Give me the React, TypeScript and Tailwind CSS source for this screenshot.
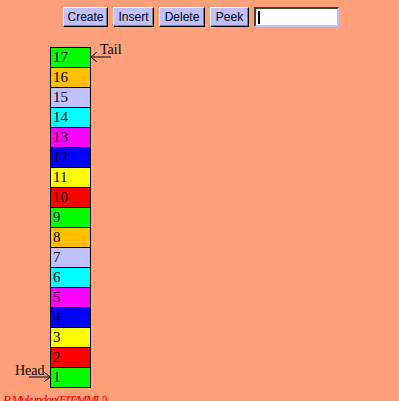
import React from "react";

const colors = [
	"bg-[#00ff00]",
	"bg-[#ff0000]",
	"bg-[#ffff00]",
	"bg-[#0000ff]",
	"bg-[#ff00ff]",
	"bg-[#00ffff]",
	"bg-[#c0c0ff]",
	"bg-[#ffc000]",
];

const items = Array.from({ length: 17 }, (_, i) => 17 - i);

function Btn({ label, w }: { label: string; w: string }) {
	return (
		<button
			className={`${w} h-[20px] bg-[#c0c0ff] border border-t-white border-l-white border-r-black border-b-black text-[12px] text-black leading-none shadow-[inset_-1px_-1px_0_#808080]`}
			style={{ fontFamily: "'Liberation Sans', Arial, sans-serif" }}
		>
			{label}
		</button>
	);
}

export default function App() {
	return (
		<div className="w-[399px] h-[401px] bg-[#ffa07a] overflow-hidden">
			<div className="flex justify-center gap-[5px] pt-[7px] pl-[3px]">
				<Btn label="Create" w="w-[45px]" />
				<Btn label="Insert" w="w-[41px]" />
				<Btn label="Delete" w="w-[46px]" />
				<Btn label="Peek" w="w-[39px]" />
				<div className="w-[85px] h-[20px] bg-white border-2 border-t-[#404040] border-l-[#404040] border-r-[#c0c0ff] border-b-[#c0c0ff] flex items-center pl-[2px]">
					<div className="w-[2px] h-[13px] bg-black" />
				</div>
			</div>
			<div className="relative ml-[50px] mt-[20px] w-[41px]">
				<div className="border border-black">
					{items.map((n, i) => (
						<div
							key={n}
							className={`${i < items.length - 1 ? "h-[20px] border-b border-black" : "h-[19px]"} ${colors[(n - 1) % 8]} flex items-center pl-[2px] text-[15px] text-black leading-none`}
							style={{ fontFamily: "'Liberation Serif', 'Times New Roman', serif" }}
						>
							{n}
						</div>
					))}
				</div>
				{/* tail pointer */}
				<div
					className="absolute left-[50px] top-[-4px] text-[14px] text-black leading-none"
					style={{ fontFamily: "'Liberation Serif', 'Times New Roman', serif" }}
				>
					Tail
				</div>
				<svg className="absolute left-[38px] top-[4px]" width="24" height="14" viewBox="0 0 24 14">
					<line x1="3" y1="6" x2="23" y2="6" stroke="black" strokeWidth="1" />
					<line x1="3" y1="6" x2="9" y2="1" stroke="black" strokeWidth="1" />
					<line x1="3" y1="6" x2="9" y2="11" stroke="black" strokeWidth="1" />
					<rect x="2" y="5" width="2" height="2" fill="black" />
				</svg>
				{/* head pointer */}
				<div
					className="absolute left-[-35px] top-[317px] text-[14px] text-black leading-none"
					style={{ fontFamily: "'Liberation Serif', 'Times New Roman', serif" }}
				>
					Head
				</div>
				<svg className="absolute left-[-21px] top-[323px]" width="24" height="14" viewBox="0 0 24 14">
					<line x1="0" y1="7" x2="21" y2="7" stroke="black" strokeWidth="1" />
					<line x1="21" y1="7" x2="15" y2="2" stroke="black" strokeWidth="1" />
					<line x1="21" y1="7" x2="15" y2="12" stroke="black" strokeWidth="1" />
					<rect x="20" y="6" width="2" height="2" fill="black" />
				</svg>
			</div>
			<div
				className="ml-[3px] mt-[5px] text-[13px] italic tracking-[-1.4px] text-[#ff0000] leading-none"
				style={{ fontFamily: "'Liberation Serif', 'Times New Roman', serif" }}
			>
				R.Mukundan(FIT/MMU)
			</div>
		</div>
	);
}
